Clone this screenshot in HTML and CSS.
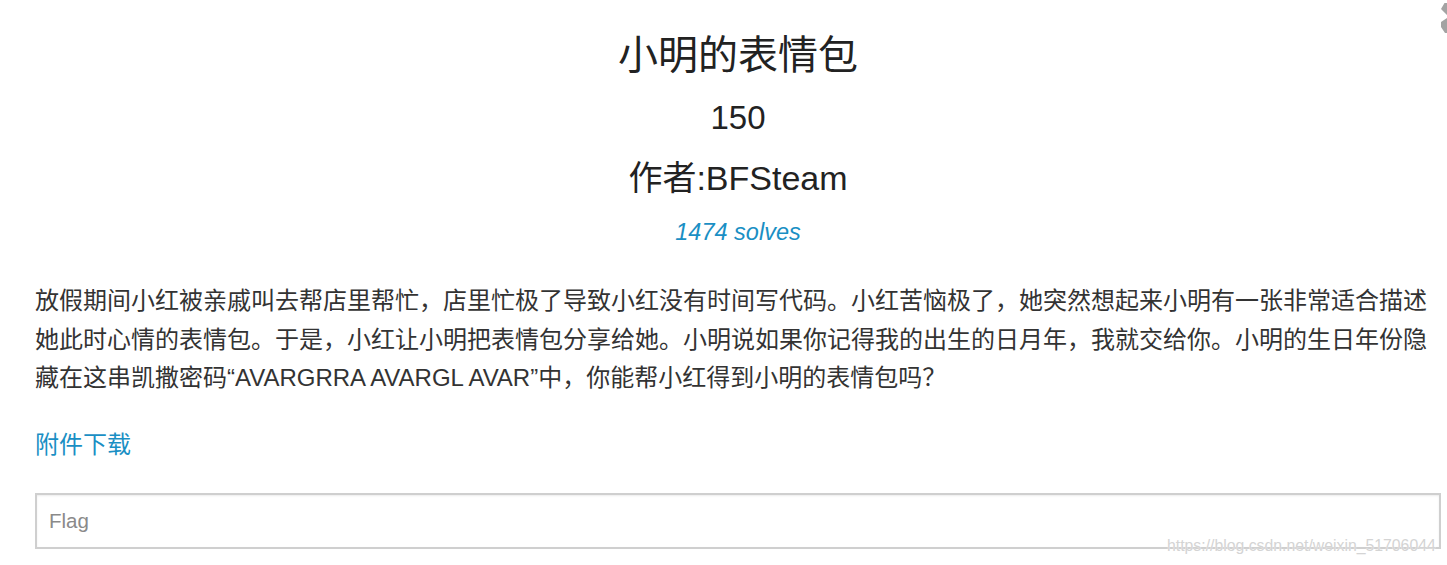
FILE: index.html
```html
<!DOCTYPE html>
<html lang="zh">
<head>
<meta charset="utf-8">
<title>小明的表情包</title>
<link rel="stylesheet" href="styles.css">
</head>
<body>
<div class="modal">
  <button class="close" aria-label="close">
    <svg width="15" height="34" viewBox="0 0 15 34"><path d="M12.5 3 L15 3 L15 15 L9 9 Z M15 18 L15 33 L13 33 L9 27 L9 22 Z" fill="#a3a3a3"/></svg>
  </button>
  <div class="content">
    <h2 class="title">小明的表情包</h2>
    <h3 class="value">150</h3>
    <h3 class="author">作者:BFSteam</h3>
    <p class="solves">1474 solves</p>
    <p class="desc">放假期间小红被亲戚叫去帮店里帮忙，店里忙极了导致小红没有时间写代码。小红苦恼极了，她突然想起来小明有一张非常适合描述她此时心情的表情包。于是，小红让小明把表情包分享给她。小明说如果你记得我的出生的日月年，我就交给你。小明的生日年份隐藏在这串凯撒密码“AVARGRRA AVARGL AVAR”中，你能帮小红得到小明的表情包吗？</p>
    <a class="download" href="#">附件下载</a>
    <div class="form">
      <input class="flag" type="text" placeholder="Flag">
    </div>
  </div>
  <span class="watermark">https://blog.csdn.net/weixin_51706044</span>
</div>
</body>
</html>
```
FILE: styles.css
```css
html, body {
  margin: 0;
  padding: 0;
  background: #fff;
  overflow: hidden;
}
body {
  font-family: "Liberation Sans", "Noto Sans CJK SC", sans-serif;
  color: #333;
}
.modal {
  position: relative;
  width: 1447px;
  height: 565px;
}
.close {
  position: absolute;
  top: 0;
  right: 0;
  padding: 0;
  border: 0;
  background: none;
  line-height: 0;
}
.content {
  padding: 22px 6px 0 35px;
  display: flex;
  flex-direction: column;
}
.title {
  margin: 0;
  text-align: center;
  font-size: 40px;
  font-weight: normal;
  line-height: 66px;
  color: #222;
}
.value {
  margin: 0;
  text-align: center;
  font-size: 33px;
  font-weight: normal;
  line-height: 60px;
  color: #222;
}
.author {
  margin: 0;
  text-align: center;
  font-size: 34px;
  font-weight: normal;
  line-height: 60px;
  color: #222;
}
.solves {
  margin: 0;
  text-align: center;
  font-size: 23.5px;
  font-style: italic;
  line-height: 48px;
  color: #1a8fc4;
}
.desc {
  margin: 26px 0 0;
  font-size: 24px;
  line-height: 38.5px;
  color: #333;
}
.download {
  margin-top: 30px;
  align-self: flex-start;
  font-size: 24px;
  line-height: 34px;
  color: #1a8fc4;
  text-decoration: none;
}
.form {
  margin-top: 31px;
}
.flag {
  box-sizing: border-box;
  width: 100%;
  height: 56px;
  border: 2px solid #cfcfcf;
  box-shadow: inset 0 1px 2px rgba(0,0,0,0.08);
  padding: 0 12px;
  font-family: "Liberation Sans", sans-serif;
  font-size: 20.5px;
  color: #555;
  background: #fff;
  outline: none;
}
.flag::placeholder {
  color: #8a8a8a;
}
.watermark {
  position: absolute;
  left: 1167px;
  top: 537px;
  font-family: "Liberation Sans", sans-serif;
  font-size: 15.8px;
  color: #d4d4d4;
  text-shadow: 0 0 1px #fff;
}
```
